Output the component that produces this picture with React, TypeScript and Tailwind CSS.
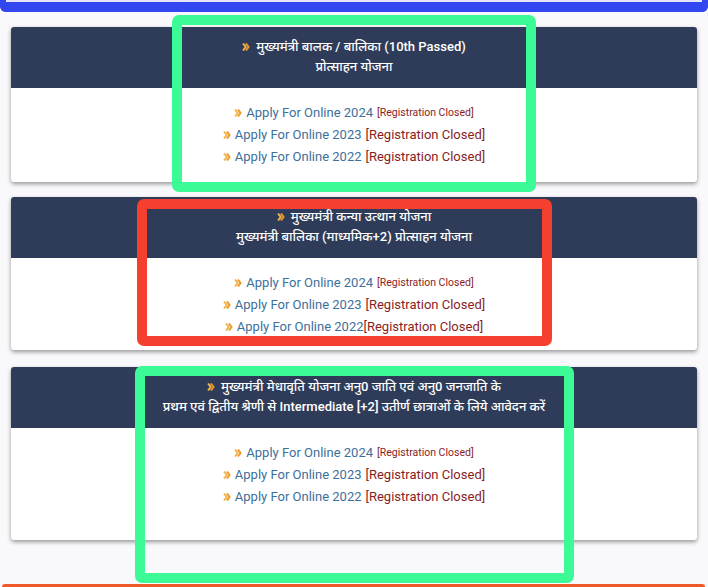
import React from "react";

const FONT = {
  fontFamily:
    'Roboto, "Noto Sans Devanagari", "Lohit Devanagari", "Noto Sans", "FreeSans", sans-serif',
};

function Arrow({ className = "" }: { className?: string }) {
  return (
    <svg
      viewBox="0 0 10 10"
      className={`inline-block h-[8px] w-[8px] ${className}`}
      aria-hidden
    >
      <path d="M0.3 1.4 L2.4 0 L6.1 5 L2.4 10 L0.3 8.6 L3.2 5 Z" fill="#f4b446" />
      <path d="M3.9 1.4 L6 0 L9.7 5 L6 10 L3.9 8.6 L6.8 5 Z" fill="#eb9a2c" />
    </svg>
  );
}

interface Scheme {
  title: string[];
  bodyH: string;
  tight?: boolean;
}

const SCHEMES: Scheme[] = [
  {
    title: ["मुख्यमंत्री बालक / बालिका (10th Passed)", "प्रोत्साहन योजना"],
    bodyH: "h-[94px]",
  },
  {
    title: ["मुख्यमंत्री कन्या उत्थान योजना", "मुख्यमंत्री बालिका (माध्यमिक+2) प्रोत्साहन योजना"],
    bodyH: "h-[92px]",
    tight: true,
  },
  {
    title: [
      "मुख्यमंत्री मेधावृति योजना अनु0 जाति एवं अनु0 जनजाति के",
      "प्रथम एवं द्वितीय श्रेणी से Intermediate [+2] उतीर्ण छात्राओं के लिये आवेदन करें",
    ],
    bodyH: "h-[112px]",
  },
];

function Card({ s }: { s: Scheme }) {
  return (
    <div className="mx-[11px] overflow-hidden rounded-[3px] bg-white shadow-[0_2px_4px_rgba(0,0,0,0.4)]">
      <div className="flex h-[61px] flex-col items-center justify-start bg-[#2f3c59] pt-[10px] text-[13px] font-medium leading-[20px] text-white">
        <div className="flex items-center gap-[6px]">
          <Arrow />
          <span>{s.title[0]}</span>
        </div>
        <div>{s.title[1]}</div>
      </div>
      <div
        className={`flex flex-col items-center pt-[14px] text-[13px] leading-[22px] ${s.bodyH}`}
      >
        {[2024, 2023, 2022].map((y) => (
          <div key={y} className="flex items-center">
            <Arrow className="mr-[4px]" />
            <span className="text-[#3d6f9b]">Apply For Online {y}</span>
            {!(s.tight && y === 2022) && <span className="w-[4px]" />}
            <span
              className={
                y === 2024
                  ? "text-[10.5px] text-[#8a1d1d]"
                  : "text-[13px] text-[#8a1d1d]"
              }
            >
              [Registration Closed]
            </span>
          </div>
        ))}
      </div>
    </div>
  );
}

export default function App() {
  return (
    <div
      className="relative h-[587px] w-[708px] overflow-hidden bg-[#f9f9fb]"
      style={FONT}
    >
      <div className="h-[12px] rounded-b-[6px] border-x-[6px] border-b-[10px] border-[#3347f0] bg-[#e6e6fb]" />

      <div className="mt-[15px] flex flex-col">
        <Card s={SCHEMES[0]} />
        <div className="h-[15px]" />
        <Card s={SCHEMES[1]} />
        <div className="h-[17px]" />
        <Card s={SCHEMES[2]} />
      </div>

      <div className="absolute bottom-0 left-[2px] right-[3px] h-[3px] rounded-t-[4px] bg-[#f0592a]" />

      {/* annotation boxes */}
      <div className="pointer-events-none absolute left-[172px] top-[15px] h-[177px] w-[364px] rounded-[7px] border-[10px] border-[#3cfb97]" />
      <div className="pointer-events-none absolute left-[137px] top-[199px] h-[147px] w-[415px] rounded-[7px] border-[10px] border-[#f5402f]" />
      <div className="pointer-events-none absolute left-[135px] top-[366px] h-[217px] w-[439px] rounded-[7px] border-[10px] border-[#3cfb97]" />
    </div>
  );
}
